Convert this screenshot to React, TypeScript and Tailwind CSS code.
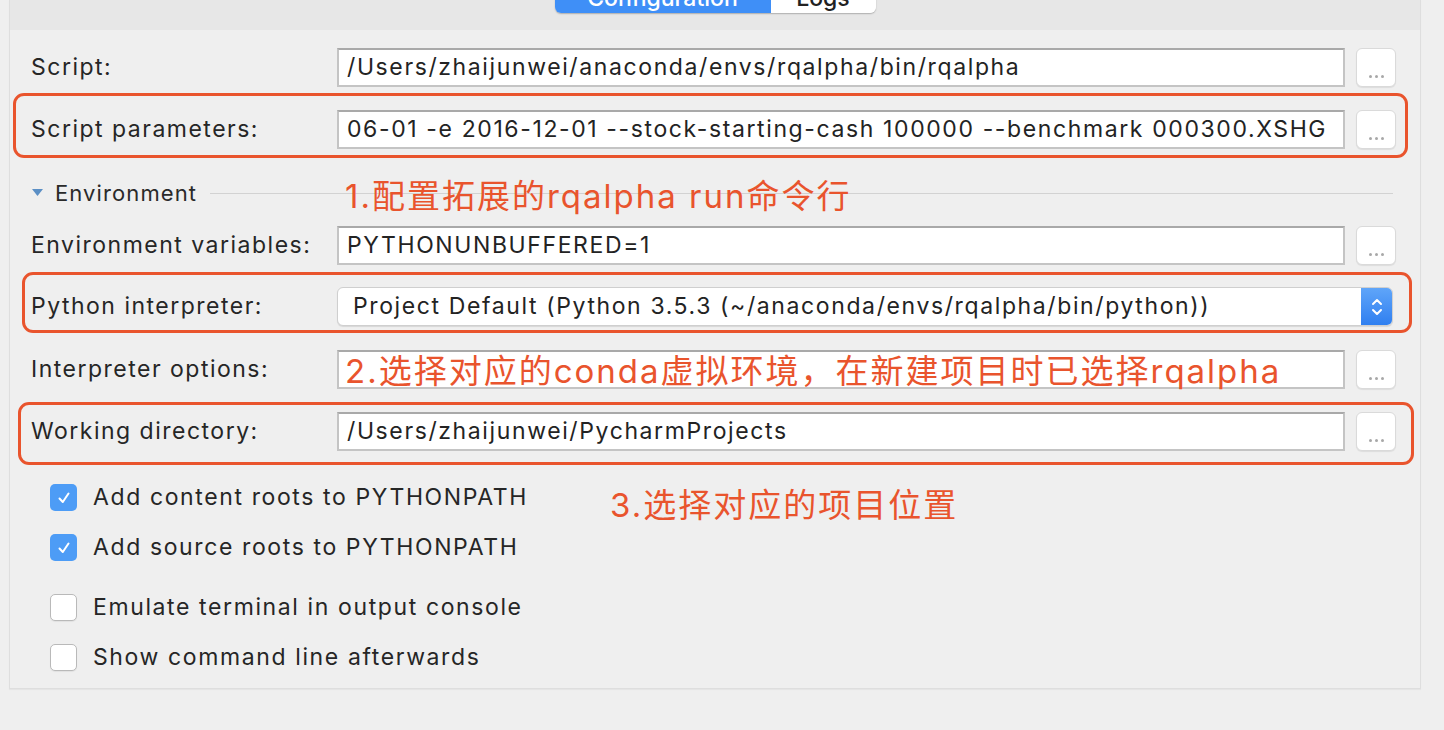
import React from "react";

const UI = { fontFamily: "Inter, 'Noto Sans', 'Noto Sans CJK SC', sans-serif" };
const CJK = { fontFamily: "Inter, 'Noto Sans CJK SC', sans-serif" };

function DotsButton() {
  return (
    <div className="w-[40px] h-[39px] shrink-0 ml-[11px] rounded-[6px] bg-white border border-[#dadada] shadow-[0_1px_1px_rgba(0,0,0,0.08)] flex items-end justify-center pb-[8px]">
      <div className="flex gap-[3px]">
        <span className="w-[3px] h-[3px] bg-[#a8a8a8] rounded-full" />
        <span className="w-[3px] h-[3px] bg-[#a8a8a8] rounded-full" />
        <span className="w-[3px] h-[3px] bg-[#a8a8a8] rounded-full" />
      </div>
    </div>
  );
}

function TextInput({ value }: { value: string }) {
  return (
    <div className="flex-1 h-[39px] bg-white border-2 border-[#c4c4c4] border-t-[#a9a9a9] flex items-center pl-[8px] overflow-hidden whitespace-nowrap text-[23px] text-[#232323] tracking-[0.07em]">
      {value}
    </div>
  );
}

function Label({ children }: { children: React.ReactNode }) {
  return (
    <div className="w-[306px] shrink-0 text-[23px] text-[#262626] tracking-[0.065em] whitespace-nowrap">
      {children}
    </div>
  );
}

function Row({ label, value, children }: { label: string; value: string; children?: React.ReactNode }) {
  return (
    <div className="relative flex items-center h-[39px] w-[1365px]">
      <Label>{label}</Label>
      <TextInput value={value} />
      <DotsButton />
      {children}
    </div>
  );
}

function RedBox({ cls }: { cls: string }) {
  return <div className={"absolute border-[3px] border-[#e9542d] rounded-[11px] pointer-events-none " + cls} />;
}

function Checkbox({ checked, label }: { checked: boolean; label: string }) {
  return (
    <div className="flex items-center h-[27px] pl-[19px]">
      {checked ? (
        <div className="w-[27px] h-[27px] rounded-[5px] bg-[#4d9cf6] flex items-center justify-center">
          <svg width="16" height="16" viewBox="0 0 16 16" fill="none">
            <path d="M3.5 8.5 L6.8 12 L12.5 3.5" stroke="white" strokeWidth="2" strokeLinecap="round" strokeLinejoin="round" />
          </svg>
        </div>
      ) : (
        <div className="w-[27px] h-[27px] rounded-[5px] bg-white border border-[#b9b9b9] shadow-[0_1px_1px_rgba(0,0,0,0.06)]" />
      )}
      <span className="ml-[16px] text-[23px] text-[#262626] tracking-[0.07em] whitespace-nowrap">{label}</span>
    </div>
  );
}

export default function App() {
  return (
    <div className="w-[1444px] h-[730px] bg-[#efefef] overflow-hidden" style={UI}>
      <div className="ml-[9px] w-[1412px] h-[689px] border-x border-b border-[#dedede] bg-[#efefef] shadow-[0_1px_1px_rgba(0,0,0,0.04)]">
        {/* top strip with segmented tabs */}
        <div className="h-[30px] bg-[#e7e7e7] flex justify-center overflow-hidden">
          <div className="mt-[-17px] h-[30px] flex rounded-[6px] overflow-hidden shadow-[0_1px_1.5px_rgba(0,0,0,0.25)]">
            <div className="w-[216px] bg-[#3f8ff7] text-white text-[23px] font-medium flex items-center justify-center">
              Configuration
            </div>
            <div className="w-[105px] bg-white text-[#222] text-[23px] font-medium flex items-center justify-center">
              Logs
            </div>
          </div>
        </div>

        <div className="pl-[21px] pt-[18px] flex flex-col">
          <Row label="Script:" value="/Users/zhaijunwei/anaconda/envs/rqalpha/bin/rqalpha" />

          <div className="mt-[23px]">
            <Row
              label="Script parameters:"
              value="06-01 -e 2016-12-01 --stock-starting-cash 100000 --benchmark 000300.XSHG"
            >
              <RedBox cls="left-[-18px] right-[-12px] top-[-17px] bottom-[-9px]" />
            </Row>
          </div>

          {/* Environment header */}
          <div className="relative mt-[32px] h-[24px] flex items-center w-[1365px]">
            <svg width="11" height="8" viewBox="0 0 11 8" className="ml-[1px]">
              <path d="M0 0 L11 0 L5.5 7 Z" fill="#5b8fc5" />
            </svg>
            <span className="ml-[12px] text-[22px] text-[#2a2a2a] tracking-[0.05em]">Environment</span>
            <div className="ml-[13px] flex-1 h-[1px] bg-[#d2d2d2] mr-[3px]" />
            <div
              className="absolute left-[314px] top-[-7px] h-[44px] leading-[44px] text-[33px] tracking-[2px] text-[#e9542d] whitespace-nowrap"
              style={CJK}
            >
              1.配置拓展的rqalpha run命令行
            </div>
          </div>

          <div className="mt-[21px]">
            <Row label="Environment variables:" value="PYTHONUNBUFFERED=1" />
          </div>

          {/* Python interpreter */}
          <div className="relative mt-[22px] flex items-center h-[39px] w-[1365px]">
            <Label>Python interpreter:</Label>
            <div className="w-[1056px] h-[39px] flex rounded-[6px] bg-white border border-[#cfcfcf] shadow-[0_1px_1px_rgba(0,0,0,0.1)] overflow-hidden">
              <div className="flex-1 flex items-center pl-[15px] text-[23px] text-[#232323] tracking-[0.07em] whitespace-nowrap">
                Project Default (Python 3.5.3 (~/anaconda/envs/rqalpha/bin/python))
              </div>
              <div className="w-[31px] bg-gradient-to-b from-[#5fa5f9] to-[#2f7ff0] flex items-center justify-center">
                <svg width="12" height="22" viewBox="0 0 12 22" fill="none">
                  <path d="M2 8 L6 4 L10 8" stroke="white" strokeWidth="2" strokeLinecap="round" strokeLinejoin="round" />
                  <path d="M2 14 L6 18 L10 14" stroke="white" strokeWidth="2" strokeLinecap="round" strokeLinejoin="round" />
                </svg>
              </div>
            </div>
            <RedBox cls="left-[-9px] right-[-16px] top-[-15px] bottom-[-7px]" />
          </div>

          <div className="mt-[24px]">
            <Row label="Interpreter options:" value="">
              <div
                className="absolute left-[314px] top-[-1px] h-[44px] leading-[44px] text-[33px] tracking-[2px] text-[#e9542d] whitespace-nowrap"
                style={CJK}
              >
                2.选择对应的conda虚拟环境，在新建项目时已选择rqalpha
              </div>
            </Row>
          </div>

          <div className="mt-[23px]">
            <Row label="Working directory:" value="/Users/zhaijunwei/PycharmProjects">
              <RedBox cls="left-[-13px] right-[-18px] top-[-10px] bottom-[-14px]" />
            </Row>
          </div>

          {/* checkboxes */}
          <div className="relative mt-[33px] flex flex-col">
            <Checkbox checked label="Add content roots to PYTHONPATH" />
            <div className="mt-[23px]">
              <Checkbox checked label="Add source roots to PYTHONPATH" />
            </div>
            <div className="mt-[33px]">
              <Checkbox checked={false} label="Emulate terminal in output console" />
            </div>
            <div className="mt-[23px]">
              <Checkbox checked={false} label="Show command line afterwards" />
            </div>
            <div
              className="absolute left-[579px] top-[-1px] h-[44px] leading-[44px] text-[33px] tracking-[2px] text-[#e9542d] whitespace-nowrap"
              style={CJK}
            >
              3.选择对应的项目位置
            </div>
          </div>
        </div>
      </div>
    </div>
  );
}
